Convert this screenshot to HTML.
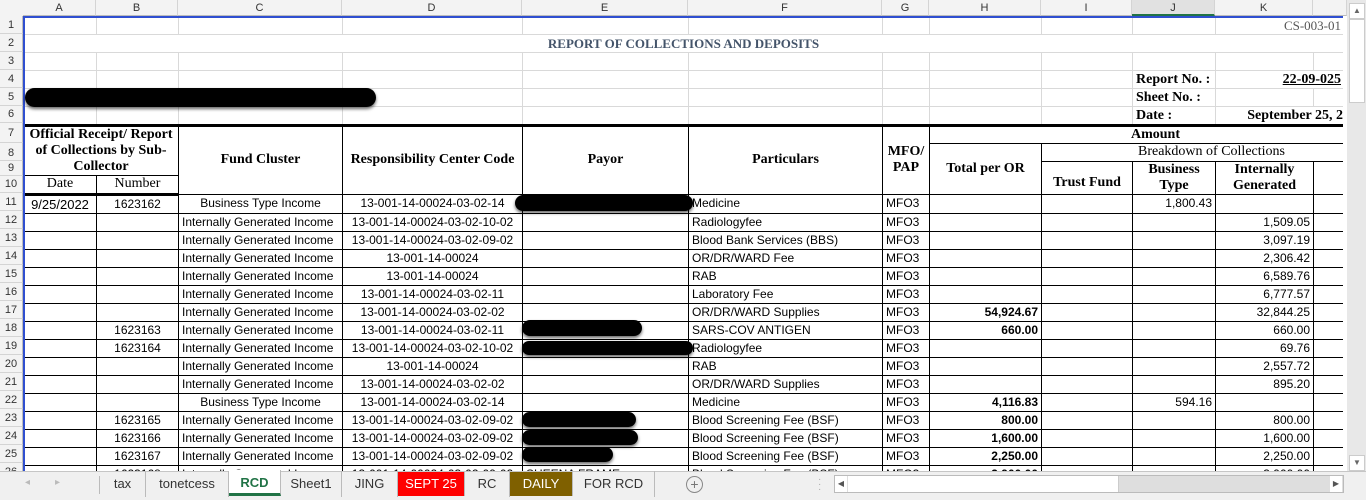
<!DOCTYPE html>
<html><head><style>
body{margin:0;width:1366px;height:499px;overflow:hidden;background:#fff;position:relative;font-family:"Liberation Sans",sans-serif}
.ch{position:absolute;top:0;height:16px;background:#f3f3f3;border-right:1px solid #d4d4d4;border-bottom:1px solid #bcbcbc;box-sizing:border-box;font-size:11px;line-height:16px;text-align:center;color:#333}
.rh{position:absolute;left:0;width:23px;background:#f3f3f3;border-bottom:1px solid #d4d4d4;border-right:1px solid #bcbcbc;box-sizing:border-box;font-size:11px;text-align:center;color:#333}
table{position:absolute;left:23px;top:16px;border-collapse:collapse;table-layout:fixed;width:1320px}
td{padding:0 3px;overflow:hidden;white-space:nowrap;font-size:12px;border:1px solid #d9d9d9;color:#000}
tr.g td{height:17px}
.hd td{border:1px solid #000;font-family:"Liberation Serif",serif;font-weight:bold;font-size:14px;text-align:center;white-space:normal;line-height:16px;padding:0 2px}
.d td{border:1px solid #000;height:17px;line-height:17px}
.c{text-align:center}.r{text-align:right}.b{font-weight:bold}
.red{position:absolute;background:#000;border-radius:10px;box-shadow:0 2px 3px rgba(0,0,0,.6)}
.tab{position:absolute;top:471px;height:26px;line-height:26px;font-size:13px;color:#333;text-align:center;border-right:1px solid #bbb;box-sizing:border-box}
</style></head><body>
<div style="position:absolute;left:0;top:0;width:1347px;height:16px;background:#f3f3f3"></div>
<div class="ch" style="left:23px;width:73px">A</div>
<div class="ch" style="left:96px;width:82px">B</div>
<div class="ch" style="left:178px;width:164px">C</div>
<div class="ch" style="left:342px;width:180px">D</div>
<div class="ch" style="left:522px;width:166px">E</div>
<div class="ch" style="left:688px;width:194px">F</div>
<div class="ch" style="left:882px;width:47px">G</div>
<div class="ch" style="left:929px;width:112px">H</div>
<div class="ch" style="left:1041px;width:91px">I</div>
<div class="ch" style="left:1132px;width:83px;background:#e1e1e1;border-bottom:2px solid #217346">J</div>
<div class="ch" style="left:1215px;width:98px">K</div>
<div class="ch" style="left:1313px;width:34px"></div>

<div class="rh" style="top:16px;height:18px;line-height:18px">1</div>
<div class="rh" style="top:34px;height:18px;line-height:18px">2</div>
<div class="rh" style="top:52px;height:18px;line-height:18px">3</div>
<div class="rh" style="top:70px;height:18px;line-height:18px">4</div>
<div class="rh" style="top:88px;height:18px;line-height:18px">5</div>
<div class="rh" style="top:106px;height:17px;line-height:17px">6</div>
<div class="rh" style="top:123px;height:20px;line-height:20px">7</div>
<div class="rh" style="top:143px;height:18px;line-height:20px">8</div>
<div class="rh" style="top:161px;height:15px;line-height:15px">9</div>
<div class="rh" style="top:176px;height:17px;line-height:17px">10</div>
<div class="rh" style="top:193px;height:18px;line-height:18px">11</div>
<div class="rh" style="top:211px;height:18px;line-height:18px">12</div>
<div class="rh" style="top:229px;height:18px;line-height:18px">13</div>
<div class="rh" style="top:247px;height:18px;line-height:18px">14</div>
<div class="rh" style="top:265px;height:18px;line-height:18px">15</div>
<div class="rh" style="top:283px;height:18px;line-height:18px">16</div>
<div class="rh" style="top:301px;height:18px;line-height:18px">17</div>
<div class="rh" style="top:319px;height:18px;line-height:18px">18</div>
<div class="rh" style="top:337px;height:18px;line-height:18px">19</div>
<div class="rh" style="top:355px;height:18px;line-height:18px">20</div>
<div class="rh" style="top:373px;height:18px;line-height:18px">21</div>
<div class="rh" style="top:391px;height:18px;line-height:18px">22</div>
<div class="rh" style="top:409px;height:18px;line-height:18px">23</div>
<div class="rh" style="top:427px;height:18px;line-height:18px">24</div>
<div class="rh" style="top:445px;height:18px;line-height:18px">25</div>
<div class="rh" style="top:463px;height:18px;line-height:18px">26</div>

<table>
<colgroup><col style="width:73px"><col style="width:82px"><col style="width:164px"><col style="width:180px"><col style="width:166px"><col style="width:194px"><col style="width:47px"><col style="width:112px"><col style="width:91px"><col style="width:83px"><col style="width:98px"><col style="width:30px"></colgroup>
<tr class="g"><td></td><td></td><td></td><td></td><td></td><td></td><td></td><td></td><td></td><td></td><td colspan="2" style="font-family:'Liberation Serif',serif;font-size:13px;color:#555;text-align:right;padding-right:2px">CS-003-01</td></tr>
<tr class="g"><td colspan="12" style="font-family:'Liberation Serif',serif;font-weight:bold;font-size:13px;color:#44546a;text-align:center;border-left:none;border-right:none">REPORT OF COLLECTIONS AND DEPOSITS</td></tr>
<tr class="g"><td></td><td></td><td></td><td></td><td></td><td></td><td></td><td></td><td></td><td></td><td></td><td></td></tr>
<tr class="g"><td></td><td></td><td></td><td></td><td></td><td></td><td></td><td></td><td></td><td class="b" style="font-family:'Liberation Serif',serif;font-size:14px;border-right:none">Report No. :</td><td colspan="2" class="b r" style="font-family:'Liberation Serif',serif;font-size:14px;text-decoration:underline;padding-right:2px">22-09-025</td></tr>
<tr class="g"><td></td><td></td><td></td><td></td><td></td><td></td><td></td><td></td><td></td><td class="b" style="font-family:'Liberation Serif',serif;font-size:14px;border-right:none">Sheet No. :</td><td></td><td></td></tr>
<tr class="g"><td></td><td></td><td></td><td></td><td></td><td></td><td></td><td></td><td></td><td class="b" style="font-family:'Liberation Serif',serif;font-size:14px;border-right:none">Date :</td><td colspan="2" class="b r" style="font-family:'Liberation Serif',serif;font-size:14px;padding-right:0">September 25, 2</td></tr>
<tbody class="hd">
<tr style="height:17px"><td colspan="2" rowspan="3" style="border-top:3px solid #000">Official Receipt/ Report of Collections by Sub-Collector</td><td rowspan="4" style="border-top:3px solid #000">Fund Cluster</td><td rowspan="4" style="border-top:3px solid #000">Responsibility Center Code</td><td rowspan="4" style="border-top:3px solid #000">Payor</td><td rowspan="4" style="border-top:3px solid #000">Particulars</td><td rowspan="4" style="border-top:3px solid #000">MFO/ PAP</td><td colspan="5" style="border-top:3px solid #000;padding-left:40px">Amount</td></tr>
<tr style="height:17px"><td rowspan="3">Total per OR</td><td colspan="4" style="font-weight:normal;padding-left:40px">Breakdown of Collections</td></tr>
<tr style="height:14px"><td rowspan="2" style="padding-top:10px">Trust Fund</td><td rowspan="2">Business Type</td><td rowspan="2">Internally Generated</td><td rowspan="2"></td></tr>
<tr style="height:15px"><td style="font-weight:normal;border-bottom:3px solid #000">Date</td><td style="font-weight:normal;border-bottom:3px solid #000">Number</td></tr>
</tbody>
<tbody class="d">
<tr><td class="c" style="font-size:13px">9/25/2022</td><td class="c">1623162</td><td class="c">Business Type Income</td><td class="c">13-001-14-00024-03-02-14</td><td></td><td>Medicine</td><td>MFO3</td><td></td><td></td><td class="r">1,800.43</td><td></td><td></td></tr>
<tr><td></td><td></td><td>Internally Generated Income</td><td class="c">13-001-14-00024-03-02-10-02</td><td></td><td>Radiologyfee</td><td>MFO3</td><td></td><td></td><td></td><td class="r">1,509.05</td><td></td></tr>
<tr><td></td><td></td><td>Internally Generated Income</td><td class="c">13-001-14-00024-03-02-09-02</td><td></td><td>Blood Bank Services (BBS)</td><td>MFO3</td><td></td><td></td><td></td><td class="r">3,097.19</td><td></td></tr>
<tr><td></td><td></td><td>Internally Generated Income</td><td class="c">13-001-14-00024</td><td></td><td>OR/DR/WARD Fee</td><td>MFO3</td><td></td><td></td><td></td><td class="r">2,306.42</td><td></td></tr>
<tr><td></td><td></td><td>Internally Generated Income</td><td class="c">13-001-14-00024</td><td></td><td>RAB</td><td>MFO3</td><td></td><td></td><td></td><td class="r">6,589.76</td><td></td></tr>
<tr><td></td><td></td><td>Internally Generated Income</td><td class="c">13-001-14-00024-03-02-11</td><td></td><td>Laboratory Fee</td><td>MFO3</td><td></td><td></td><td></td><td class="r">6,777.57</td><td></td></tr>
<tr><td></td><td></td><td>Internally Generated Income</td><td class="c">13-001-14-00024-03-02-02</td><td></td><td>OR/DR/WARD Supplies</td><td>MFO3</td><td class="r b">54,924.67</td><td></td><td></td><td class="r">32,844.25</td><td></td></tr>
<tr><td></td><td class="c">1623163</td><td>Internally Generated Income</td><td class="c">13-001-14-00024-03-02-11</td><td></td><td>SARS-COV ANTIGEN</td><td>MFO3</td><td class="r b">660.00</td><td></td><td></td><td class="r">660.00</td><td></td></tr>
<tr><td></td><td class="c">1623164</td><td>Internally Generated Income</td><td class="c">13-001-14-00024-03-02-10-02</td><td></td><td>Radiologyfee</td><td>MFO3</td><td></td><td></td><td></td><td class="r">69.76</td><td></td></tr>
<tr><td></td><td></td><td>Internally Generated Income</td><td class="c">13-001-14-00024</td><td></td><td>RAB</td><td>MFO3</td><td></td><td></td><td></td><td class="r">2,557.72</td><td></td></tr>
<tr><td></td><td></td><td>Internally Generated Income</td><td class="c">13-001-14-00024-03-02-02</td><td></td><td>OR/DR/WARD Supplies</td><td>MFO3</td><td></td><td></td><td></td><td class="r">895.20</td><td></td></tr>
<tr><td></td><td></td><td class="c">Business Type Income</td><td class="c">13-001-14-00024-03-02-14</td><td></td><td>Medicine</td><td>MFO3</td><td class="r b">4,116.83</td><td></td><td class="r">594.16</td><td></td><td></td></tr>
<tr><td></td><td class="c">1623165</td><td>Internally Generated Income</td><td class="c">13-001-14-00024-03-02-09-02</td><td></td><td>Blood Screening Fee (BSF)</td><td>MFO3</td><td class="r b">800.00</td><td></td><td></td><td class="r">800.00</td><td></td></tr>
<tr><td></td><td class="c">1623166</td><td>Internally Generated Income</td><td class="c">13-001-14-00024-03-02-09-02</td><td></td><td>Blood Screening Fee (BSF)</td><td>MFO3</td><td class="r b">1,600.00</td><td></td><td></td><td class="r">1,600.00</td><td></td></tr>
<tr><td></td><td class="c">1623167</td><td>Internally Generated Income</td><td class="c">13-001-14-00024-03-02-09-02</td><td></td><td>Blood Screening Fee (BSF)</td><td>MFO3</td><td class="r b">2,250.00</td><td></td><td></td><td class="r">2,250.00</td><td></td></tr>
<tr><td></td><td class="c">1623168</td><td>Internally Generated Income</td><td class="c">13-001-14-00024-03-02-09-02</td><td>SHEENA FRAME</td><td>Blood Screening Fee (BSF)</td><td>MFO3</td><td class="r b">3,900.00</td><td></td><td></td><td class="r">3,900.00</td><td></td></tr>
</tbody>
</table>
<div style="position:absolute;left:23px;top:16px;width:1322px;height:2px;background:#2f4fd0"></div>
<div style="position:absolute;left:23px;top:16px;width:2px;height:455px;background:#2f4fd0"></div>
<div style="position:absolute;left:1343px;top:16px;width:4px;height:455px;background:#fff"></div>

<div class="red" style="left:25px;top:88px;width:351px;height:19px"></div>
<div class="red" style="left:515px;top:195px;width:178px;height:16px"></div>
<div class="red" style="left:522px;top:320px;width:120px;height:16px"></div>
<div class="red" style="left:522px;top:341px;width:171px;height:14px"></div>
<div class="red" style="left:522px;top:412px;width:114px;height:15px"></div>
<div class="red" style="left:522px;top:430px;width:116px;height:15px"></div>
<div class="red" style="left:522px;top:447px;width:91px;height:15px"></div>

<div style="position:absolute;left:1347px;top:0;width:19px;height:471px;background:#e8e8e8"></div>
<div style="position:absolute;left:1349px;top:3px;width:14px;height:14px;background:#fff;border:1px solid #ccc;font-size:8px;text-align:center;line-height:14px;color:#666">▲</div>
<div style="position:absolute;left:1349px;top:19px;width:14px;height:82px;background:#fff;border:1px solid #ccc"></div>
<div style="position:absolute;left:1349px;top:455px;width:14px;height:14px;background:#fff;border:1px solid #ccc;font-size:8px;text-align:center;line-height:14px;color:#666">▼</div>

<div style="position:absolute;left:0;top:471px;width:1366px;height:28px;background:#f0f0f0;border-top:1px solid #c6c6c6"></div>
<div style="position:absolute;left:25px;top:477px;font-size:10px;color:#bbb">◂</div>
<div style="position:absolute;left:55px;top:477px;font-size:10px;color:#bbb">▸</div>
<div style="position:absolute;left:99px;top:476px;width:1px;height:18px;background:#bbb"></div>
<div class="tab" style="left:100px;width:46px">tax</div>
<div class="tab" style="left:146px;width:83px">tonetcess</div>
<div class="tab" style="left:229px;width:52px;background:#fff;color:#217346;font-weight:bold;border-bottom:3px solid #217346;top:470px">RCD</div>
<div class="tab" style="left:281px;width:61px">Sheet1</div>
<div class="tab" style="left:342px;width:56px">JING</div>
<div class="tab" style="left:398px;width:67px;background:#ff0000;color:#fff;top:472px;height:24px;line-height:24px">SEPT 25</div>
<div class="tab" style="left:465px;width:45px">RC</div>
<div class="tab" style="left:510px;width:63px;background:#7f6000;color:#fff;top:472px;height:24px;line-height:24px">DAILY</div>
<div class="tab" style="left:573px;width:82px">FOR RCD</div>
<div style="position:absolute;left:686px;top:476px;width:15px;height:15px;border:1px solid #888;border-radius:50%;font-size:14px;line-height:15px;text-align:center;color:#777">+</div>
<div style="position:absolute;left:818px;top:477px;font-size:10px;color:#aaa;line-height:5px">·<br>·<br>·</div>
<div style="position:absolute;left:834px;top:475px;width:508px;height:16px;background:#dedede;border:1px solid #bbb"></div>
<div style="position:absolute;left:835px;top:476px;width:12px;height:16px;background:#fff;font-size:8px;line-height:16px;text-align:center;color:#555">◀</div>
<div style="position:absolute;left:848px;top:476px;width:270px;height:16px;background:#fff;border-right:1px solid #ccc"></div>
<div style="position:absolute;left:1330px;top:476px;width:12px;height:16px;background:#fff;font-size:8px;line-height:16px;text-align:center;color:#555">▶</div>
</body></html>
